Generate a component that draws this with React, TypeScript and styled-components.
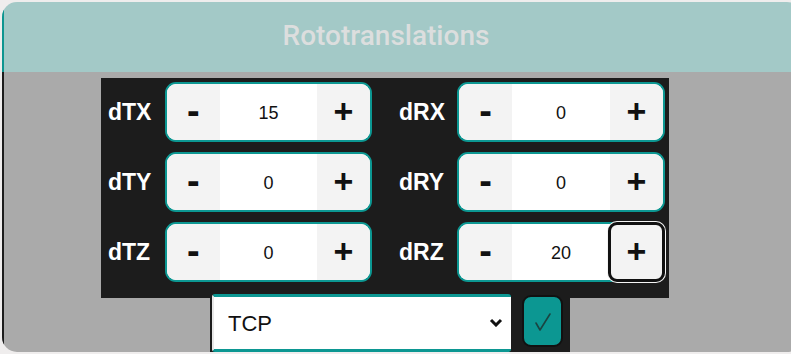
import React, { useState } from 'react';
import styled, { createGlobalStyle } from 'styled-components';

const GlobalStyle = createGlobalStyle`
    html, body {
        margin: 0;
        padding: 0;
        background: #efeded;
        font-family: "Liberation Sans", Arial, sans-serif;
    }
`;

const Page = styled.div`
    padding: 2px 0 0 2px;
    width: 791px;
    height: 354px;
    box-sizing: border-box;
    overflow: hidden;
`;

const Card = styled.div`
    width: 800px;
    height: 350px;
    border-radius: 15px;
    overflow: hidden;
    display: flex;
    flex-direction: column;
`;

const Header = styled.div`
    height: 70px;
    flex-shrink: 0;
    box-sizing: border-box;
    background: #a3c9c7;
    border-left: 2px solid #0d9590;
    display: flex;
    align-items: center;
    justify-content: center;
    padding: 0 34px 4px 0;
    color: #dcdede;
    font-family: Roboto, "Liberation Sans", sans-serif;
    font-size: 28px;
    font-weight: 500;
`;

const Body = styled.div`
    flex: 1;
    background: #aaaaaa;
    border-left: 2px solid #1c1c1c;
    padding: 6px 0 0 97px;
    display: flex;
    flex-direction: column;
    align-items: flex-start;
`;

const Grid = styled.div`
    background: #1c1c1c;
    width: 568px;
    box-sizing: border-box;
    padding: 4px 4px 16px 7px;
    display: grid;
    grid-template-columns: 264px 1fr;
    grid-auto-rows: 60px;
    row-gap: 10px;
`;

const Cell = styled.div<{ $right?: boolean }>`
    display: flex;
    align-items: center;
    justify-content: space-between;
    padding-left: ${p => (p.$right ? '27px' : '0')};
`;

const Label = styled.span`
    color: #ffffff;
    font-size: 23px;
    font-weight: bold;
    width: 57px;
`;

const Stepper = styled.div`
    display: flex;
    width: 208px;
    height: 60px;
    box-sizing: border-box;
    border: 2px solid #0c9792;
    border-radius: 11px;
    background: #ffffff;
`;

const StepButton = styled.button<{ $sign: string; $focused?: boolean }>`
    width: 53px;
    border: none;
    padding: 0 0 2px 0;
    background: #f3f3f3;
    color: #111;
    font-family: "Liberation Sans", Arial, sans-serif;
    font-weight: bold;
    font-size: ${p => (p.$sign === '+' ? '34px' : '38px')};
    line-height: 1;
    display: flex;
    align-items: center;
    justify-content: center;
    border-radius: ${p => (p.$sign === '+' ? '0 9px 9px 0' : '9px 0 0 9px')};
    position: relative;
    ${p => p.$focused ? `
        outline: 3px solid #111;
        outline-offset: -1px;
        box-shadow: 0 0 0 3px #f4f4f4;
        border-radius: 7px;
        z-index: 1;
    ` : ''}
`;

const Value = styled.div`
    flex: 1;
    display: flex;
    align-items: center;
    justify-content: center;
    font-size: 18px;
    color: #111;
    padding-top: 2px;
`;

const BottomRow = styled.div`
    margin-left: 109px;
    width: 360px;
    height: 60px;
    background: #1c1c1c;
    display: flex;
    align-items: flex-start;
    gap: 11px;
`;

const SelectWrap = styled.div`
    position: relative;
    margin-top: -4px;
    margin-left: 2px;
    width: 299px;
    height: 58px;
`;

const Select = styled.select`
    appearance: none;
    width: 100%;
    height: 100%;
    box-sizing: border-box;
    border: none;
    border-top: 3px solid #0c9792;
    border-bottom: 3px solid #0c9792;
    border-left: 2px solid #e8e8e8;
    border-radius: 3px;
    background: #ffffff;
    padding: 0 0 0 14px;
    font-family: "Liberation Sans", Arial, sans-serif;
    font-size: 22px;
    color: #111;
    outline: none;
`;

const Chevron = styled.svg`
    position: absolute;
    right: 8px;
    top: 24px;
    pointer-events: none;
`;

const OkButton = styled.button`
    width: 41px;
    height: 52px;
    margin-top: -3px;
    background: #0c9792;
    border: 2px solid #111;
    border-radius: 9px;
    padding: 2px 0 0 0;
    display: flex;
    align-items: center;
    justify-content: center;
`;

const rows = [
    ['dTX', 15, 'dRX', 0],
    ['dTY', 0, 'dRY', 0],
    ['dTZ', 0, 'dRZ', 20],
] as const;

const Spinner: React.FC<{ value: number; focused?: boolean }> = ({ value, focused }) => (
    <Stepper>
        <StepButton $sign="-">-</StepButton>
        <Value>{value}</Value>
        <StepButton $sign="+" $focused={focused}>+</StepButton>
    </Stepper>
);

const App: React.FC = () => {
    const [frame, setFrame] = useState('TCP');
    return (
        <>
            <GlobalStyle />
            <Page>
                <Card>
                    <Header>Rototranslations</Header>
                    <Body>
                        <Grid>
                            {rows.map(([a, av, b, bv]) => (
                                <React.Fragment key={a}>
                                    <Cell>
                                        <Label>{a}</Label>
                                        <Spinner value={av} />
                                    </Cell>
                                    <Cell $right>
                                        <Label>{b}</Label>
                                        <Spinner value={bv} focused={b === 'dRZ'} />
                                    </Cell>
                                </React.Fragment>
                            ))}
                        </Grid>
                        <BottomRow>
                            <SelectWrap>
                                <Select value={frame} onChange={e => setFrame(e.target.value)}>
                                    <option>TCP</option>
                                    <option>Base</option>
                                </Select>
                                <Chevron width="14" height="9" viewBox="0 0 14 9">
                                    <path d="M2 2 L7 7 L12 2" stroke="#111" strokeWidth="3" fill="none" />
                                </Chevron>
                            </SelectWrap>
                            <OkButton>
                                <svg width="18" height="20" viewBox="0 0 18 20">
                                    <path d="M2 11 L6 18 L16 2" stroke="#1a4441" strokeWidth="1.6" fill="none" strokeLinecap="round" strokeLinejoin="round" />
                                </svg>
                            </OkButton>
                        </BottomRow>
                    </Body>
                </Card>
            </Page>
        </>
    );
};

export default App;
